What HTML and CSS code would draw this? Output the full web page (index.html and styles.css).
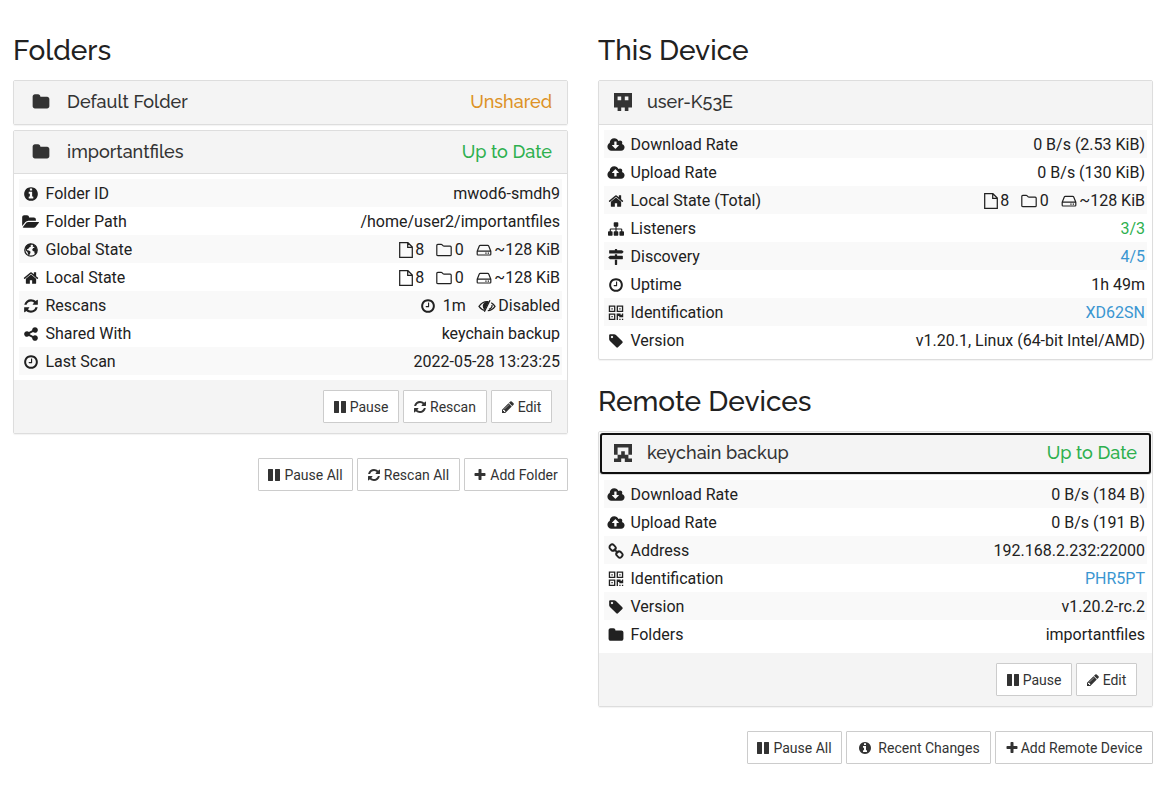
FILE: index.html
```html
<!DOCTYPE html>
<html lang="en">
<head>
<meta charset="utf-8">
<title>Syncthing</title>
<link rel="stylesheet" href="styles.css">
</head>
<body>
<svg class="sprite" aria-hidden="true">
<symbol id="folder" viewBox="0 0 1792 1792"><path d="M1728 608v704q0 92-66 158t-158 66h-1216q-92 0-158-66t-66-158v-960q0-92 66-158t158-66h320q92 0 158 66t66 158v32h672q92 0 158 66t66 158z"/></symbol>
<symbol id="folder-o" viewBox="0 0 16 16"><path d="M.8 12.7V3.4q0-1 1-1h3.4q.6 0 1 .4l1 1.1q.3.3.8.3h6.2q1 0 1 1v7.5q0 1-1 1H1.8q-1 0-1-1z" fill="none" stroke="currentColor" stroke-width="1.2"/></symbol>
<symbol id="file-o" viewBox="0 0 14 16"><path d="M.7.7h8.2l4.4 4.4v10.2H.7zM8.7.7v4.6h4.6" fill="none" stroke="currentColor" stroke-width="1.25"/></symbol>
<symbol id="hdd" viewBox="0 0 16 16"><path d="M1.2 9.2 3.3 4q.3-.7 1-.7h7.4q.7 0 1 .7l2.1 5.2v3q0 .8-.8.8H2q-.8 0-.8-.8zm0 0h13.6" fill="none" stroke="currentColor" stroke-width="1.2"/><path d="M9.3 10.6h1.3v1.2H9.3zm2.4 0H13v1.2h-1.3z"/></symbol>
<symbol id="info" viewBox="0 0 1792 1792"><path d="M1152 1376v-160q0-14-9-23t-23-9h-96v-512q0-14-9-23t-23-9h-320q-14 0-23 9t-9 23v160q0 14 9 23t23 9h96v320h-96q-14 0-23 9t-9 23v160q0 14 9 23t23 9h448q14 0 23-9t9-23zm-128-896v-160q0-14-9-23t-23-9h-192q-14 0-23 9t-9 23v160q0 14 9 23t23 9h192q14 0 23-9t9-23zm640 416q0 209-103 385.5t-279.5 279.5-385.5 103-385.5-103-279.5-279.5-103-385.5 103-385.5 279.5-279.5 385.5-103 385.5 103 279.5 279.5 103 385.5z"/></symbol>
<symbol id="folder-open" viewBox="0 0 1850 1792"><path d="M1815 952q0 31-31 66l-336 396q-43 51-120.5 86.5t-143.5 35.5h-1088q-34 0-60.5-13t-26.5-43q0-31 31-66l336-396q43-51 120.5-86.5t143.5-35.5h1088q34 0 60.5 13t26.5 43zm-343-344v160h-832q-94 0-197 47.5t-164 119.5l-337 396-5 6q0-4-.5-12.5t-.5-12.5v-960q0-92 66-158t158-66h320q92 0 158 66t66 158v32h544q92 0 158 66t66 158z"/></symbol>
<symbol id="globe" viewBox="0 0 16 16"><circle cx="8" cy="8" r="6.2" fill="none" stroke="currentColor" stroke-width="1.3"/><path d="M2.2 5.5 4.6 2.5 7.6 1.6 8.8 2.8 7.4 3.4 8 4.6 6.2 5.6 5.4 6.8 4 7.2 4.2 8.2 6 8.6 7.6 9.8 7.2 11.4 6 13.4 5 12.2 4.6 10.2 2.8 8.4zM10 2.6 12.6 4 13.8 6.4 14 9.6 12.4 12.2 11.4 11.2 11.4 9.4 9.8 9 9.2 7.4 10.2 6 11.6 5.8 10.8 4.8 9.8 5z"/></symbol>
<symbol id="home" viewBox="0 0 1792 1792"><path d="M1472 992v480q0 26-19 45t-45 19h-384v-384h-256v384h-384q-26 0-45-19t-19-45v-480q0-1 .5-3t.5-3l575-474 575 474q1 2 1 6zm223-69l-62 74q-8 9-21 11h-3q-13 0-21-7l-692-577-692 577q-12 8-24 7-13-2-21-11l-62-74q-8-10-7-23.5t11-21.5l719-599q32-26 76-26t76 26l244 204v-195q0-14 9-23t23-9h192q14 0 23 9t9 23v408l219 182q10 8 11 21.5t-7 23.5z"/></symbol>
<symbol id="refresh" viewBox="0 0 1792 1792"><path d="M1639 1056q0 5-1 7-64 268-268 434.5t-478 166.5q-146 0-282.5-55t-243.5-157l-129 129q-19 19-45 19t-45-19-19-45v-448q0-26 19-45t45-19h448q26 0 45 19t19 45-19 45l-137 137q71 66 161 102t187 36q134 0 250-65t186-179q11-17 53-117 8-23 30-23h192q13 0 22.5 9.5t9.5 22.5zm25-800v448q0 26-19 45t-45 19h-448q-26 0-45-19t-19-45 19-45l138-138q-148-137-349-137-134 0-250 65t-186 179q-11 17-53 117-8 23-30 23h-199q-13 0-22.5-9.5t-9.5-22.5v-7q65-268 270-434.5t480-166.5q146 0 284 55.5t245 156.5l130-129q19-19 45-19t45 19 19 45z"/></symbol>
<symbol id="share" viewBox="0 0 1792 1792"><path d="M1344 1024q133 0 226.5 93.5t93.5 226.5-93.5 226.5-226.5 93.5-226.5-93.5-93.5-226.5q0-12 2-34l-360-180q-92 86-218 86-133 0-226.5-93.5t-93.5-226.5 93.5-226.5 226.5-93.5q126 0 218 86l360-180q-2-22-2-34 0-133 93.5-226.5t226.5-93.5 226.5 93.5 93.5 226.5-93.5 226.5-226.5 93.5q-126 0-218-86l-360 180q2 22 2 34t-2 34l360 180q92-86 218-86z"/></symbol>
<symbol id="clock" viewBox="0 0 1792 1792"><path d="M1024 544v448q0 14-9 23t-23 9h-320q-14 0-23-9t-9-23v-64q0-14 9-23t23-9h224v-352q0-14 9-23t23-9h64q14 0 23 9t9 23zm416 352q0-148-73-273t-198-198-273-73-273 73-198 198-73 273 73 273 198 198 273 73 273-73 198-198 73-273zm224 0q0 209-103 385.5t-279.5 279.5-385.5 103-385.5-103-279.5-279.5-103-385.5 103-385.5 279.5-279.5 385.5-103 385.5 103 279.5 279.5 103 385.5z"/></symbol>
<symbol id="eye-slash" viewBox="0 0 18 16"><path d="M7.4 12.5Q3.4 11.800 1 8.300 4.400 3.600 9 3.600h1.200M13.200 4.800Q15.500 6 17 8.300 14.200 12.300 9.800 12.700M12 2.200 6.400 13.800M14 6.800q.5 3-3 4.500" fill="none" stroke="currentColor" stroke-width="1.250"/><path d="M11.100 3.500 6.800 12.200Q4.500 10.500 4.700 7.800 5.500 4.200 9 3.600z"/></symbol>
<symbol id="pause" viewBox="0 0 1792 1792"><path d="M1664 192v1408q0 26-19 45t-45 19h-512q-26 0-45-19t-19-45v-1408q0-26 19-45t45-19h512q26 0 45 19t19 45zm-896 0v1408q0 26-19 45t-45 19h-512q-26 0-45-19t-19-45v-1408q0-26 19-45t45-19h512q26 0 45 19t19 45z"/></symbol>
<symbol id="pencil" viewBox="0 0 1792 1792"><path d="M491 1536l91-91-235-235-91 91v107h128v128h107zm523-928q0-22-22-22-10 0-17 7l-542 542q-7 7-7 17 0 22 22 22 10 0 17-7l542-542q7-7 7-17zm-54-192l416 416-832 832h-416v-416zm683 96q0 53-37 90l-166 166-416-416 166-165q36-38 90-38 53 0 91 38l235 234q37 39 37 91z"/></symbol>
<symbol id="plus" viewBox="0 0 1792 1792"><path d="M1600 736v192q0 40-28 68t-68 28h-416v416q0 40-28 68t-68 28h-192q-40 0-68-28t-28-68v-416h-416q-40 0-68-28t-28-68v-192q0-40 28-68t68-28h416v-416q0-40 28-68t68-28h192q40 0 68 28t28 68v416h416q40 0 68 28t28 68z"/></symbol>
<symbol id="sitemap" viewBox="0 0 1792 1792"><path d="M1792 1248v320q0 40-28 68t-68 28h-320q-40 0-68-28t-28-68v-320q0-40 28-68t68-28h96v-192h-512v192h96q40 0 68 28t28 68v320q0 40-28 68t-68 28h-320q-40 0-68-28t-28-68v-320q0-40 28-68t68-28h96v-192h-512v192h96q40 0 68 28t28 68v320q0 40-28 68t-68 28h-320q-40 0-68-28t-28-68v-320q0-40 28-68t68-28h96v-192q0-52 38-90t90-38h512v-192h-96q-40 0-68-28t-28-68v-320q0-40 28-68t68-28h320q40 0 68 28t28 68v320q0 40-28 68t-68 28h-96v192h512q52 0 90 38t38 90v192h96q40 0 68 28t28 68z"/></symbol>
<symbol id="signs" viewBox="0 0 1792 1792"><path d="M1745 297q10 10 10 23t-10 23l-141 141q-28 28-68 28h-1344q-26 0-45-19t-19-45v-256q0-26 19-45t45-19h576v-64q0-26 19-45t45-19h128q26 0 45 19t19 45v64h512q40 0 68 28zm-977 919h256v512q0 26-19 45t-45 19h-128q-26 0-45-19t-19-45v-512zm832-448q26 0 45 19t19 45v256q0 26-19 45t-45 19h-1344q-40 0-68-28l-141-141q-10-10-10-23t10-23l141-141q28-28 68-28h512v-192h256v192h576z"/></symbol>
<symbol id="cloud-down" viewBox="0 0 1920 1792"><path d="M1280 928q0-14-9-23t-23-9h-224v-352q0-13-9.500-22.500t-22.500-9.500h-192q-13 0-22.500 9.500t-9.500 22.500v352h-224q-13 0-22.500 9.500t-9.500 22.500q0 14 9 23l352 352q9 9 23 9t23-9l351-351q10-12 10-24zm640 224q0 159-112.500 271.500t-271.500 112.500h-1088q-185 0-316.500-131.500t-131.500-316.500q0-130 70-240t188-165q-2-30-2-43 0-212 150-362t362-150q156 0 285.500 87t188.500 231q71-62 166-62 106 0 181 75t75 181q0 76-41 138 130 31 213.500 135.500t83.500 238.500z"/></symbol>
<symbol id="cloud-up" viewBox="0 0 1920 1792"><path d="M1280 864q0-14-9-23l-352-352q-9-9-23-9t-23 9l-351 351q-10 12-10 24 0 14 9 23t23 9h224v352q0 13 9.500 22.500t22.500 9.500h192q13 0 22.500-9.500t9.500-22.500v-352h224q13 0 22.500-9.500t9.500-22.500zm640 288q0 159-112.500 271.500t-271.500 112.500h-1088q-185 0-316.500-131.500t-131.500-316.500q0-130 70-240t188-165q-2-30-2-43 0-212 150-362t362-150q156 0 285.500 87t188.500 231q71-62 166-62 106 0 181 75t75 181q0 76-41 138 130 31 213.500 135.500t83.500 238.500z"/></symbol>
<symbol id="tag" viewBox="0 0 1792 1792"><path d="M576 448q0-53-37.500-90.500t-90.500-37.500-90.500 37.500-37.500 90.500 37.500 90.500 90.500 37.500 90.500-37.500 37.500-90.500zm1067 576q0 53-37 90l-491 492q-39 37-91 37-53 0-90-37l-715-716q-38-37-64.500-101t-26.500-117v-416q0-52 38-90t90-38h416q53 0 117 26.500t102 64.500l715 714q37 39 37 91z"/></symbol>
<symbol id="qr" viewBox="-.6 -.4 12.200 12.200"><path fill-rule="evenodd" d="M0 0h5v5H0zM1 1v3h3V1zM2 2h1v1H2zM6 0h5v5H6zM7 1v3h3V1zM8 2h1v1H8zM0 6h5v5H0zM1 7v3h3V7zM2 8h1v1H2zM6 6h3v1h1V6h1v3H8V8H7v3H6zM8 10h1v1H8zM10 10h1v1h-1z"/></symbol>
<symbol id="link" viewBox="0 0 16 16"><g fill="none" stroke="currentColor" stroke-width="1.900"><rect x="1.400" y="2" width="6.400" height="5.200" rx="2.400" transform="rotate(45 4.600 4.600)"/><rect x="8.200" y="8.800" width="6.400" height="5.200" rx="2.400" transform="rotate(45 11.400 11.400)"/><path d="M5.800 5.800l4.400 4.400"/></g></symbol>
<symbol id="ident-a" viewBox="0 0 5 5"><path fill-rule="evenodd" d="M0 0h5v4H4v1H3V4H2v1H1V4H0zM1 1v1h1V1zM3 1v1h1V1z"/></symbol>
<symbol id="ident-b" viewBox="0 0 5 5"><path d="M0 0h5v3H4V1H1v2H0zM2 2h1v1h1v1h1v1H3V4H2v1H0V4h1V3h1z"/></symbol>
</svg>

<main class="columns">
<section class="column">
<h3 class="heading">Folders</h3>
<div class="panel">
<div class="panel-head raised"><svg class="head-icon folder-icon"><use href="#folder"/></svg><span class="title">Default Folder</span><span class="status warning">Unshared</span></div>
</div>
<div class="panel stacked">
<div class="panel-head ruled short"><svg class="head-icon folder-icon"><use href="#folder"/></svg><span class="title">importantfiles</span><span class="status success">Up to Date</span></div>
<div class="rows">
<div class="row"><svg class="icon"><use href="#info"/></svg><span>Folder ID</span><span class="value">mwod6-smdh9</span></div>
<div class="row"><svg class="icon wide"><use href="#folder-open"/></svg><span>Folder Path</span><span class="value">/home/user2/importantfiles</span></div>
<div class="row"><svg class="icon"><use href="#globe"/></svg><span>Global State</span><span class="value stats"><span class="stat"><svg class="file"><use href="#file-o"/></svg>8</span><span class="stat"><svg><use href="#folder-o"/></svg>0</span><span class="stat"><svg><use href="#hdd"/></svg>~128 KiB</span></span></div>
<div class="row"><svg class="icon"><use href="#home"/></svg><span>Local State</span><span class="value stats"><span class="stat"><svg class="file"><use href="#file-o"/></svg>8</span><span class="stat"><svg><use href="#folder-o"/></svg>0</span><span class="stat"><svg><use href="#hdd"/></svg>~128 KiB</span></span></div>
<div class="row"><svg class="icon"><use href="#refresh"/></svg><span>Rescans</span><span class="value stats"><span class="stat interval"><svg><use href="#clock"/></svg>1m</span><span class="stat"><svg class="eye"><use href="#eye-slash"/></svg>Disabled</span></span></div>
<div class="row"><svg class="icon"><use href="#share"/></svg><span>Shared With</span><span class="value">keychain backup</span></div>
<div class="row"><svg class="icon"><use href="#clock"/></svg><span>Last Scan</span><span class="value">2022-05-28 13:23:25</span></div>
</div>
<div class="panel-foot">
<button class="btn w-pause"><svg><use href="#pause"/></svg>Pause</button>
<button class="btn w-rescan"><svg><use href="#refresh"/></svg>Rescan</button>
<button class="btn w-edit"><svg><use href="#pencil"/></svg>Edit</button>
</div>
</div>
<div class="actions">
<button class="btn w-pause-all"><svg><use href="#pause"/></svg>Pause All</button>
<button class="btn w-rescan-all"><svg><use href="#refresh"/></svg>Rescan All</button>
<button class="btn w-add"><svg><use href="#plus"/></svg>Add Folder</button>
</div>
</section>

<section class="column">
<h3 class="heading">This Device</h3>
<div class="panel">
<div class="panel-head ruled raised"><svg class="head-icon"><use href="#ident-a"/></svg><span class="title">user-K53E</span></div>
<div class="rows">
<div class="row"><svg class="icon wide"><use href="#cloud-down"/></svg><span>Download Rate</span><span class="value">0 B/s (2.53 KiB)</span></div>
<div class="row"><svg class="icon wide"><use href="#cloud-up"/></svg><span>Upload Rate</span><span class="value">0 B/s (130 KiB)</span></div>
<div class="row"><svg class="icon"><use href="#home"/></svg><span>Local State (Total)</span><span class="value stats"><span class="stat"><svg class="file"><use href="#file-o"/></svg>8</span><span class="stat"><svg><use href="#folder-o"/></svg>0</span><span class="stat"><svg><use href="#hdd"/></svg>~128 KiB</span></span></div>
<div class="row"><svg class="icon"><use href="#sitemap"/></svg><span>Listeners</span><span class="value success">3/3</span></div>
<div class="row"><svg class="icon"><use href="#signs"/></svg><span>Discovery</span><span class="value link">4/5</span></div>
<div class="row"><svg class="icon"><use href="#clock"/></svg><span>Uptime</span><span class="value">1h 49m</span></div>
<div class="row"><svg class="icon"><use href="#qr"/></svg><span>Identification</span><span class="value link">XD62SN</span></div>
<div class="row"><svg class="icon"><use href="#tag"/></svg><span>Version</span><span class="value">v1.20.1, Linux (64-bit Intel/AMD)</span></div>
</div>
</div>
<h3 class="heading second">Remote Devices</h3>
<div class="panel">
<div class="panel-head ruled short focused"><svg class="head-icon"><use href="#ident-b"/></svg><span class="title">keychain backup</span><span class="status success">Up to Date</span></div>
<div class="rows">
<div class="row"><svg class="icon wide"><use href="#cloud-down"/></svg><span>Download Rate</span><span class="value">0 B/s (184 B)</span></div>
<div class="row"><svg class="icon wide"><use href="#cloud-up"/></svg><span>Upload Rate</span><span class="value">0 B/s (191 B)</span></div>
<div class="row"><svg class="icon"><use href="#link"/></svg><span>Address</span><span class="value">192.168.2.232:22000</span></div>
<div class="row"><svg class="icon"><use href="#qr"/></svg><span>Identification</span><span class="value link">PHR5PT</span></div>
<div class="row"><svg class="icon"><use href="#tag"/></svg><span>Version</span><span class="value">v1.20.2-rc.2</span></div>
<div class="row"><svg class="icon"><use href="#folder"/></svg><span>Folders</span><span class="value">importantfiles</span></div>
</div>
<div class="panel-foot">
<button class="btn w-pause"><svg><use href="#pause"/></svg>Pause</button>
<button class="btn w-edit"><svg><use href="#pencil"/></svg>Edit</button>
</div>
</div>
<div class="actions">
<button class="btn w-pause-all"><svg><use href="#pause"/></svg>Pause All</button>
<button class="btn w-recent"><svg><use href="#info"/></svg>Recent Changes</button>
<button class="btn w-remote"><svg><use href="#plus"/></svg>Add Remote Device</button>
</div>
</section>
</main>
</body>
</html>
```

FILE: styles.css
```css
* { box-sizing: border-box; }
body {
  margin: 0;
  background: #fff;
  color: #212121;
  font: 16px/20px Roboto, "Liberation Sans", sans-serif;
}
svg { display: block; flex: none; fill: currentColor; }
.sprite { position: absolute; width: 0; height: 0; }
.columns {
  display: grid;
  grid-template-columns: 555px 555px;
  column-gap: 30px;
  padding: 35px 0 0 13px;
}
.heading {
  margin: 0 0 13px;
  font: 500 28px/32px Raleway, Lato, sans-serif;
  white-space: nowrap;
}
.heading.second { margin: 26px 0 13px; }
.panel {
  border: 1px solid #ddd;
  border-radius: 2px;
  box-shadow: 0 1px 1px rgba(0, 0, 0, .05);
}
.panel.stacked { margin-top: 5px; }
.panel-head {
  display: flex;
  align-items: center;
  height: 43px;
  padding: 0 15px;
  background: #f4f4f4;
  color: #333;
  font: 500 18px/20px Raleway, Lato, sans-serif;
  white-space: nowrap;
}
.panel-head.raised { padding-bottom: 2px; }
.panel-head.ruled { height: 44px; border-bottom: 1px solid #ddd; }
.panel-head.ruled.short { height: 43px; }
.panel-head.focused { outline: 2px solid #101010; outline-offset: -3px; border-radius: 4px; }
.head-icon { width: 18px; height: 18px; margin-right: 15px; }
.folder-icon { margin: 0 17px 0 3px; }
.status { margin-left: auto; }
.success { color: #2eb04f; }
.warning { color: #dd9226; }
.link { color: #3a96d1; }
.rows { padding: 5px; }
.row {
  display: flex;
  align-items: center;
  height: 28px;
  padding: 2px 2px 0 5px;
  white-space: nowrap;
}
.row:nth-child(odd) { background: #f9f9f9; }
.icon { width: 16px; height: 16px; margin: 0 6.5px 0 -1px; }
.icon.wide { width: 18px; margin: 0 5.5px 0 -2px; }
.value { margin-left: auto; }
.stats, .stat { display: flex; align-items: center; }
.stats { gap: 12px; }
.stat { gap: 2.5px; }
.stat svg { width: 16px; height: 16px; }
.stat .file { width: 14px; }
.stat .eye { width: 18px; }
.stat.interval { gap: 7px; }
.panel-foot {
  display: flex;
  justify-content: flex-end;
  gap: 4px;
  padding: 10px 15px;
  background: #f4f4f4;
}
.actions {
  display: flex;
  justify-content: flex-end;
  gap: 4px;
  margin-top: 24px;
}
.btn {
  display: flex;
  align-items: center;
  justify-content: center;
  gap: 3px;
  height: 33px;
  padding: 0 1px 0 0;
  border: 1px solid #ccc;
  border-radius: 1px;
  background: #fff;
  color: #333;
  font: 14px/20px Roboto, "Liberation Sans", sans-serif;
  white-space: nowrap;
}
.btn svg { width: 14px; height: 14px; }
.w-pause { width: 76px; }
.w-rescan { width: 84px; }
.w-edit { width: 61px; }
.w-pause-all { width: 95px; }
.w-rescan-all { width: 103px; }
.w-add { width: 104px; }
.w-recent { width: 145px; gap: 6px; padding: 0 0 0 1px; }
.w-remote { width: 158px; gap: 2px; }
```
